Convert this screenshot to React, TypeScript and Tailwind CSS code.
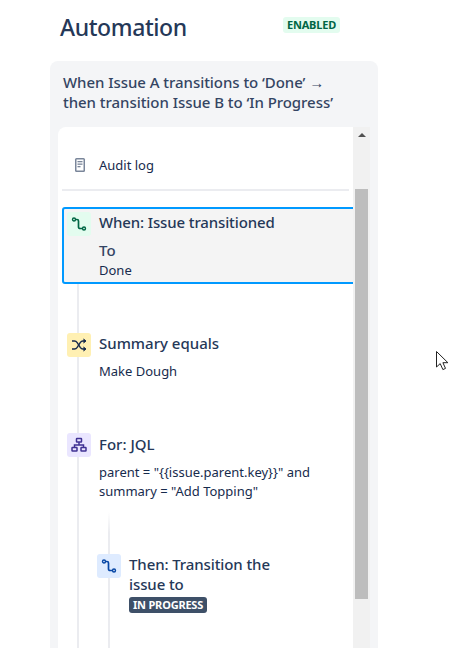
const FONT = "font-['Noto_Sans',sans-serif]";

function RouteIcon({ className }: { className: string }) {
  return (
    <svg width="16" height="16" viewBox="0 0 16 16" fill="none" stroke="currentColor" className={className}>
      <circle cx="3" cy="3.500" r="1.500" strokeWidth="1.400" />
      <circle cx="13" cy="12.500" r="1.500" strokeWidth="1.400" />
      <path d="M4.500 3.500h1.500a1.500 1.500 0 0 1 1.500 1.500v6a1.500 1.500 0 0 0 1.500 1.500h2" strokeWidth="1.700" />
    </svg>
  );
}

function ShuffleIcon() {
  return (
    <svg width="16" height="16" viewBox="0 0 16 16" fill="none" stroke="#172B4D" strokeWidth="1.4">
      <path d="M1 4h2.500c1.200 0 2 .6 2.700 1.600l3 4.800c.7 1 1.500 1.600 2.700 1.600H14" />
      <path d="M1 12h2.500c1.200 0 2-.6 2.700-1.600l3-4.800C9.900 4.600 10.700 4 11.900 4H14" />
      <path d="M12.500 2 15 4l-2.500 2M12.500 10l2.500 2-2.500 2" fill="#172B4D" strokeWidth="1" />
    </svg>
  );
}

function TreeIcon() {
  return (
    <svg width="16" height="16" viewBox="0 0 16 16" fill="none" stroke="#403294" strokeWidth="1.500">
      <rect x="5.500" y="1.500" width="5" height="3.500" rx="0.500" />
      <rect x="1" y="10.500" width="5" height="3.500" rx="0.500" />
      <rect x="10" y="10.500" width="5" height="3.500" rx="0.500" />
      <path d="M8 5v3M3.500 10.500V8h9v2.500" />
    </svg>
  );
}

function Tile({ color, children }: { color: string; children: React.ReactNode }) {
  return (
    <div className={`relative z-10 flex h-6 w-6 shrink-0 items-center justify-center rounded-[3px] ${color}`}>
      {children}
    </div>
  );
}

export default function App() {
  return (
    <div className={`relative h-[648px] w-[461px] overflow-hidden bg-white text-[#172B4D] ${FONT}`}>
      <div className="flex items-start pl-[60px] pt-[10px]">
        <h1 className="w-[223px] text-[23px] leading-[34px] font-medium tracking-[-0.4px] text-[#253858]">Automation</h1>
        <span className="mt-[7px] rounded-[3px] bg-[#E3FCEF] px-1 text-[11px] leading-4 font-bold tracking-[-0.2px] text-[#006644]">
          ENABLED
        </span>
      </div>

      <div className="mt-[17px] ml-[50px] h-[600px] w-[328px] rounded-t-lg bg-[#F4F5F7] px-2 pt-[11px]">
        <p className="mx-[5px] text-[15px] leading-5 font-medium tracking-[-0.05px] text-[#344563]">
          When Issue A transitions to ‘Done’ →
          <br />
          then transition Issue B to ‘In Progress’
        </p>

        <div className="mt-[15px] flex h-[530px] overflow-hidden rounded-tl-lg">
          <div className="relative w-[295px] overflow-hidden bg-white">
            <span className="absolute top-[100px] left-[19px] h-[440px] w-0.5 bg-[#EBECF0]" />
            <span className="absolute top-[385px] left-[50px] h-[140px] w-0.5 bg-linear-to-b from-transparent to-[#EBECF0] to-[15%]" />

            <div className="flex h-[62px] items-end gap-[13px] pb-[15px] pl-4">
              <svg width="12" height="16" viewBox="0 0 12 16" className="mb-[1px]">
                <rect x="1" y="1" width="10" height="14" rx="1.500" fill="#7A869A" />
                <rect x="2.500" y="2.500" width="7" height="11" fill="#fff" />
                <rect x="3.500" y="4" width="5" height="1.300" fill="#7A869A" />
                <rect x="3.500" y="6.500" width="5" height="1.300" fill="#7A869A" />
                <rect x="3.500" y="9" width="3" height="1.300" fill="#7A869A" />
              </svg>
              <span className="text-[13px] leading-[18px]">Audit log</span>
            </div>
            <div className="mx-1 h-0.5 bg-[#EBECF0]" />

            <div className="relative mt-4 ml-1 flex h-[77px] w-[300px] gap-2 rounded-[3px] border-2 border-[#0099FF] bg-[#F4F4F4] pt-[3px] pl-[3px]">
              <Tile color="bg-[#E3FCEF]">
                <RouteIcon className="text-[#006644]" />
              </Tile>
              <div>
                <h3 className="text-[15px] leading-5 font-medium tracking-[-0.13px] text-[#253858]">When: Issue transitioned</h3>
                <p className="mt-2 text-[15px] leading-5 font-medium text-[#344563]">To</p>
                <p className="text-[13px] leading-[18px] pt-px">Done</p>
              </div>
            </div>

            <div className="mt-[49px] flex gap-2 pl-[9px]">
              <Tile color="bg-[#FFF0B3]">
                <ShuffleIcon />
              </Tile>
              <div>
                <h3 className="text-[15px] leading-5 font-medium text-[#253858]">Summary equals</h3>
                <p className="mt-[9px] text-[13px] leading-[18px]">Make Dough</p>
              </div>
            </div>

            <div className="mt-[53px] flex gap-2 pl-[9px]">
              <Tile color="bg-[#EAE6FF]">
                <TreeIcon />
              </Tile>
              <div>
                <h3 className="text-[15px] leading-[22px] font-medium text-[#253858]">For: JQL</h3>
                <p className="mt-2 w-[230px] text-[13px] leading-[19px]">
                  {'parent = "{{issue.parent.key}}" and summary = "Add Topping"'}
                </p>
              </div>
            </div>

            <div className="mt-[53px] flex gap-2 pl-[39px]">
              <Tile color="bg-[#DEEBFF]">
                <RouteIcon className="text-[#0747A6]" />
              </Tile>
              <div>
                <h3 className="w-[160px] text-[15px] leading-5 font-medium tracking-[-0.1px] text-[#253858]">
                  Then: Transition the issue to
                </h3>
                <span className="mt-[3px] block w-fit rounded-[3px] bg-[#3E5068] px-1 text-[11px] leading-4 font-bold tracking-[-0.2px] text-white">
                  IN PROGRESS
                </span>
              </div>
            </div>
          </div>

          <div className="w-[17px] shrink-0 bg-[#F1F1F1]">
            <div className="mx-auto mt-[6px] h-0 w-0 border-x-[4px] border-b-[4px] border-x-transparent border-b-[#505050]" />
            <div className="mx-auto mt-[52px] h-[410px] w-[13px] bg-[#BDBDBD]" />
          </div>
        </div>
      </div>

      <svg width="14" height="22" viewBox="0 0 14 22" className="absolute top-[350px] left-[435px]">
        <path d="M1.500 1.500v15.500l3.700-3.400 2.700 6 2.600-1.200-2.600-5.700h5z" fill="#fff" stroke="#222" strokeWidth="1" />
      </svg>
    </div>
  );
}
